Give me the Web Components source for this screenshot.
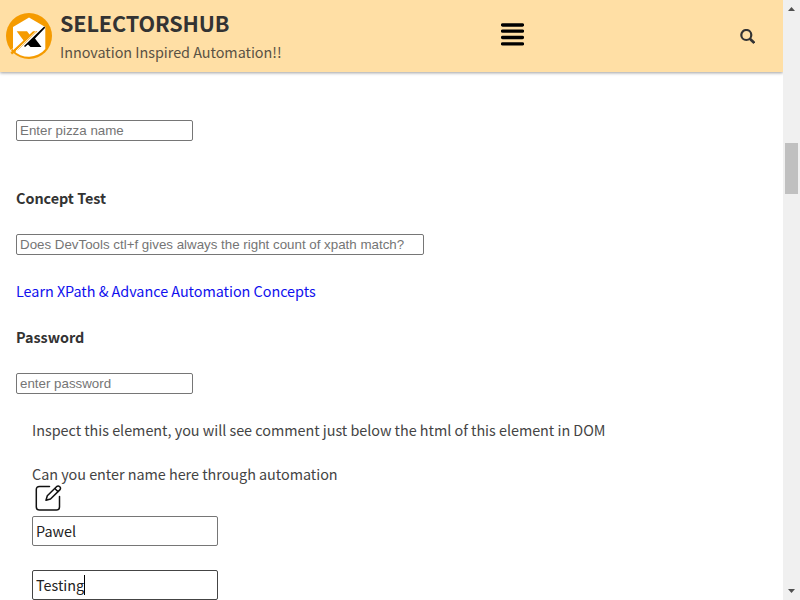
<!DOCTYPE html>
<html lang="en">
<head>
<meta charset="utf-8">
<title>SelectorsHub</title>
<style>
html,body{margin:0;height:100%;overflow:hidden;background:#fff}
body{font-family:"Noto Sans CJK SC","Noto Sans",sans-serif;color:#333}
</style>
</head>
<body>
<practice-page></practice-page>
<script>
const define=(name,html,init)=>customElements.define(name,class extends HTMLElement{
  constructor(){
    super();
    const t=document.createElement('template');
    t.innerHTML=html;
    this.attachShadow({mode:'open'}).append(t.content.cloneNode(true));
  }
  connectedCallback(){if(init)init(this,this.shadowRoot);}
});

define('brand-logo',`<style>:host{display:block;width:46px;height:46px}svg{display:block}</style>
<svg width="46" height="46" viewBox="0 0 46 46">
<circle cx="23" cy="23" r="23" fill="#f59b00"/>
<path d="M23 4.500 39.300 14V36A21.500 21.500 0 0 1 7 37V14Z" fill="#fff"/>
<path d="M10.700 18.300H21L23.500 21.500 27 18.300H31.500L13 36 6 41.500 4.500 39.500 17.500 27.500Z" fill="#f59b00"/>
<path d="M38.200 13.500 39.200 14.700 29 25.500 35.500 34H24.500L22 31.500 19 34 18 33Z" fill="#000"/>
<path d="M10 38 30 18.500M13.500 36.500 29.500 20.500" stroke="#fff" stroke-width=".9" fill="none"/>
<path d="M4 38 17 26.500" stroke="#fff" stroke-width=".5"/>
</svg>`);

define('menu-icon',`<style>:host{display:block;width:23px;height:23px}svg{display:block}</style>
<svg width="23" height="23" viewBox="0 0 23 23"><path d="M1.500 2H21.500M1.500 8.200H21.500M1.500 14.500H21.500M1.500 20.800H21.500" stroke="#000" stroke-width="3.300" stroke-linecap="round"/></svg>`);

define('search-icon',`<style>:host{display:block;width:15px;height:15px}svg{display:block}</style>
<svg width="15" height="15" viewBox="0 0 15 15" fill="none" stroke="#333"><circle cx="6.300" cy="6" r="5" stroke-width="2.200"/><path d="M9.900 9.700 14.300 14" stroke-width="2.600"/></svg>`);

define('edit-icon',`<style>:host{display:block;width:27px;height:27px}svg{display:block}</style>
<svg width="27" height="27" viewBox="0 0 27 27" fill="none" stroke="#111" stroke-width="1.500" stroke-linecap="round" stroke-linejoin="round">
<path d="M14.500 1.500H4.500Q1.300 1.500 1.300 4.500V22Q1.300 25 4.500 25H21.500Q24.500 25 24.500 22V11.500"/>
<path d="M11 15.300 12.300 10.800 21.500 1.700Q23.200.300 24.800 1.700 26.200 3.200 24.800 4.900L15.500 14ZM19.800 3.500 23.100 6.700"/></svg>`);

define('site-header',`<style>
:host{display:flex;box-sizing:border-box;height:72px;background:#ffdfa5;box-shadow:0 1px 3px rgba(0,0,0,.38);padding-left:6px;align-items:flex-start;position:relative}
brand-logo{margin-top:13px}
.brand{display:flex;flex-direction:column;width:441px;margin-left:8px;white-space:nowrap}
.name{font-size:21.600px;font-weight:700;line-height:30px;margin-top:8px;letter-spacing:-.13px}
.tag{font-size:14.400px;line-height:24px;margin-top:2px;color:#5a5244;letter-spacing:-.03px}
menu-icon{margin-top:23px}
search-icon{margin:29px 28px 0 auto}
</style><brand-logo></brand-logo><div class="brand"><span class="name"><slot name="name"></slot></span><span class="tag"><slot name="tagline"></slot></span></div><menu-icon></menu-icon><search-icon></search-icon>`);

define('text-field',`<style>
:host{display:block;height:21px;width:177px}
input{display:block;box-sizing:border-box;width:100%;height:100%;margin:0;border:1px solid #767676;border-radius:2px;padding:1px 3px;background:#fff;font:13.333px "Liberation Sans",Arial,sans-serif;color:#222;outline:0}
input::placeholder{color:#757575;opacity:1}
:host([large]){width:186px;height:30px}
:host([large]) input{font:14.400px "Noto Sans CJK SC","Noto Sans",sans-serif;padding:0 3px 2px}
:host([active]) input{border-color:#444}
:host([active]){position:relative}
:host([active])::after{content:"";position:absolute;left:52px;top:5px;width:1px;height:20px;background:#000}
</style><input>`,(el,r)=>{
  const i=r.querySelector('input');
  i.placeholder=el.getAttribute('placeholder')||'';
  i.value=el.getAttribute('value')||'';
});

define('text-line',`<style>
:host{display:block;height:24px;line-height:24px;font-size:14.400px;white-space:nowrap;letter-spacing:-.03px;color:#444}
:host([heading]){font-weight:700;color:#333}
:host([link]){color:#1010ee}
</style><slot></slot>`);

define('page-scrollbar',`<style>
:host{display:flex;flex-direction:column;align-items:center;width:17px;height:600px;background:#f0f0f0;flex:none}
svg{display:block}
.thumb{width:13px;height:51px;background:#c0c0c0;margin-top:126px}
.down{margin-top:auto}
</style><svg width="17" height="17"><path d="M5 11H12L8.500 7Z" fill="#505050"/></svg><div class="thumb"></div><svg class="down" width="17" height="17"><path d="M5 6H12L8.500 10Z" fill="#505050"/></svg>`);

define('practice-page',`<style>
:host{display:flex;width:800px;height:600px;overflow:hidden}
.view{width:783px;height:600px;overflow:hidden}
main{display:flex;flex-direction:column;padding:48px 16px 0}
.inner{display:flex;flex-direction:column;padding-left:16px}
</style>
<div class="view">
<site-header><span slot="name">SELECTORSHUB</span><span slot="tagline">Innovation Inspired Automation!!</span></site-header>
<main>
<text-field placeholder="Enter pizza name"></text-field>
<text-line heading style="margin-top:45px">Concept Test</text-line>
<text-field style="width:408px;margin-top:24px" placeholder="Does DevTools ctl+f gives always the right count of xpath match?"></text-field>
<text-line link style="margin-top:24px">Learn XPath &amp; Advance Automation Concepts</text-line>
<text-line heading style="margin-top:22px">Password</text-line>
<text-field style="margin-top:24px" placeholder="enter password"></text-field>
<div class="inner">
<text-line style="margin-top:24px">Inspect this element, you will see comment just below the html of this element in DOM</text-line>
<text-line style="margin-top:20px">Can you enter name here through automation</text-line>
<edit-icon style="margin:-1px 0 0 3px"></edit-icon>
<text-field large style="margin-top:4px" value="Pawel"></text-field>
<text-field large active style="margin-top:24px" value="Testing"></text-field>
</div>
</main>
</div>
<page-scrollbar></page-scrollbar>`);
</script>
</body>
</html>
